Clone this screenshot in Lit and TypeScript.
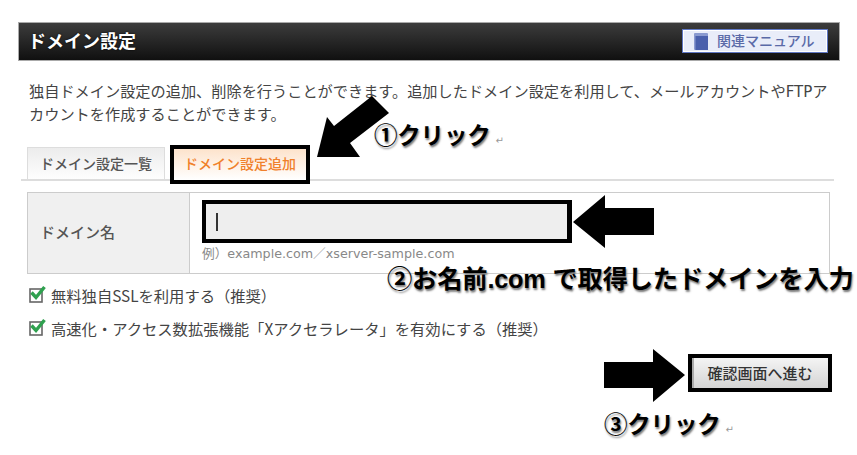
import { LitElement, html, css, svg } from 'lit';
import { customElement } from 'lit/decorators.js';

const check = html`<svg class="check" width="18" height="18" viewBox="0 0 18 18">
  <rect x="1" y="4" width="12" height="13" fill="#fff" stroke="#666" stroke-width="1.6"></rect>
  <path d="M2.5 7.5 L7 12.5 L15.5 2" fill="none" stroke="#2fa14f" stroke-width="3.4"></path>
</svg>`;

const arrow = (cls: string, points: string) => svg`<polygon class=${cls} points=${points}></polygon>`;

@customElement('app-root')
export class AppRoot extends LitElement {
  static styles = css`
    :host {
      display: block;
      position: relative;
      width: 857px;
      height: 455px;
      overflow: hidden;
      background: #fff;
      font-family: "DejaVu Sans", "Noto Sans CJK JP", sans-serif;
      color: #444;
    }
    .page {
      padding: 22px 18px 0 18px;
      box-sizing: border-box;
      width: 857px;
    }
    .head {
      box-sizing: border-box;
      width: 822px;
      height: 39px;
      border: 1px solid #aaa;
      background: linear-gradient(#3c3c3c, #101010);
      display: flex;
      align-items: center;
      justify-content: space-between;
      padding: 0 11px 0 9px;
    }
    .head h1 {
      margin: -3px 0 0 0;
      font: 700 18px "Noto Sans CJK JP", sans-serif;
      color: #fff;
      text-shadow: 0 0 2px #000;
    }
    .manual {
      box-sizing: border-box;
      width: 146px;
      height: 24px;
      margin-top: -1px;
      background: #e9edf9;
      border: 1px solid #5f77c4;
      box-shadow: inset 0 0 0 1px #fff;
      display: flex;
      align-items: center;
      gap: 9px;
      padding-left: 11px;
      font: 500 14px "Noto Sans CJK JP", sans-serif;
      color: #5a6aa8;
    }
    .manual span { margin-top: -3px; }
    .desc {
      margin: 18px 0 0 11px;
      width: 806px;
      font: 400 15.2px/23px "Noto Sans CJK JP", sans-serif;
      color: #444;
      word-break: break-all;
    }
    .desc .lat { font-family: "DejaVu Sans", sans-serif; font-size: 15px; line-height: 1; }
    .tabs {
      display: flex;
      align-items: flex-end;
      margin: 20px 0 0 3px;
      width: 813px;
      height: 39px;
      box-sizing: border-box;
      position: relative;
      gap: 5px;
    }
    .tabs::after {
      content: "";
      position: absolute;
      left: 0;
      right: 0;
      bottom: 3px;
      height: 2px;
      background: #ddd;
    }
    .tab {
      box-sizing: border-box;
      font: 500 14px "Noto Sans CJK JP", sans-serif;
      display: flex;
      align-items: center;
      justify-content: center;
      padding-bottom: 3px;
    }
    .tab.list {
      width: 138px;
      height: 34px;
      margin: 0 0 3px 6px;
      border: 1px solid #ddd;
      border-bottom: none;
      background: linear-gradient(#ececec, #fff);
      color: #555;
    }
    .tab.add {
      width: 140px;
      height: 39px;
      border: 4px solid #000;
      background: linear-gradient(#fde3cc, #fff);
      color: #f0802a;
      position: relative;
      z-index: 1;
    }
    .form {
      box-sizing: border-box;
      margin: 8px 0 0 9px;
      width: 803px;
      height: 82px;
      border: 1px solid #ccc;
      display: flex;
    }
    .label {
      box-sizing: border-box;
      width: 162px;
      background: #f0f0f0;
      border-right: 1px solid #ccc;
      display: flex;
      align-items: center;
      padding: 0 0 3px 12px;
      font: 500 15px "Noto Sans CJK JP", sans-serif;
      color: #555;
    }
    .field {
      padding: 7px 0 0 12px;
    }
    .input {
      box-sizing: border-box;
      width: 370px;
      height: 43px;
      border: 4px solid #000;
      border-right-width: 5px;
      background: #eee;
      display: flex;
      align-items: center;
      padding-left: 10px;
    }
    .input i {
      display: block;
      width: 1.5px;
      height: 18px;
      background: #333;
    }
    .hint {
      margin-top: 2px;
      font: 12.7px/18px "DejaVu Sans", "Noto Sans CJK JP", sans-serif;
      color: #888;
      white-space: nowrap;
    }
    .opts {
      margin: 10px 0 0 11px;
      display: flex;
      flex-direction: column;
      gap: 11px;
    }
    .opt {
      display: flex;
      align-items: center;
      gap: 4px;
      height: 22px;
      font: 400 15.3px "Noto Sans CJK JP", sans-serif;
      color: #444;
    }
    .check { flex: none; margin-top: -2px; }
    .actions {
      display: flex;
      justify-content: flex-end;
      width: 814px;
      margin-top: 15px;
    }
    .next {
      box-sizing: border-box;
      width: 144px;
      height: 38px;
      border: 4px solid #000;
      background: linear-gradient(#f4f4f4, #d4d4d4);
      box-shadow: inset 2px 0 0 #aaa;
      font: 500 15px "Noto Sans CJK JP", sans-serif;
      color: #333;
      display: flex;
      align-items: center;
      justify-content: center;
      padding: 0 0 2px 0;
    }
    .marks {
      position: absolute;
      left: 0;
      top: 0;
      pointer-events: none;
    }
    .marks polygon { fill: #000; }
    .cap {
      position: absolute;
      font: 700 23.5px/28px "Liberation Sans", "Noto Sans CJK JP", sans-serif;
      color: #000;
      text-shadow: 1px 2px 2px #777;
      white-space: nowrap;
      letter-spacing: -0.2px;
    }
    .cap small {
      font: 400 10px "DejaVu Sans", sans-serif;
      color: #999;
      text-shadow: none;
      margin-left: 5px;
    }
    .c1 { left: 374px; top: 122px; }
    .c2 { left: 387px; top: 265px; font-size: 25.3px; }
    .c3 { left: 604px; top: 411px; }
  `;

  render() {
    return html`
      <div class="page">
        <div class="head">
          <h1>ドメイン設定</h1>
          <div class="manual">
            <svg width="14" height="17" viewBox="0 0 14 17">
              <rect x="0" y="0" width="14" height="17" rx="1" fill="#8a9ad0"></rect>
              <rect x="1.5" y="3" width="12.5" height="14" fill="#4a60ac"></rect>
            </svg>
            <span>関連マニュアル</span>
          </div>
        </div>
        <p class="desc">独自ドメイン設定の追加、削除を行うことができます。追加したドメイン設定を利用して、メールアカウントや<span class="lat">FTP</span>アカウントを作成することができます。</p>
        <div class="tabs">
          <div class="tab list">ドメイン設定一覧</div>
          <div class="tab add">ドメイン設定追加</div>
        </div>
        <div class="form">
          <div class="label">ドメイン名</div>
          <div class="field">
            <div class="input"><i></i></div>
            <div class="hint">例）example.com／xserver-sample.com</div>
          </div>
        </div>
        <div class="opts">
          <div class="opt">${check}<span>無料独自SSLを利用する（推奨）</span></div>
          <div class="opt">${check}<span>高速化・アクセス数拡張機能「Xアクセラレータ」を有効にする（推奨）</span></div>
        </div>
        <div class="actions">
          <button class="next">確認画面へ進む</button>
        </div>
      </div>
      <svg class="marks" width="857" height="455">
        ${arrow('a1', '317,157 327,117 334,126 372,96 389,113 350,143 360,157')}
        ${arrow('a2', '573,222 605,195 605,208 654,208 654,235 605,235 605,248')}
        ${arrow('a3', '604,362 653,362 653,349 685,375 653,402 653,388 604,388')}
      </svg>
      <div class="cap c1">①クリック<small>↵</small></div>
      <div class="cap c2">②お名前.com で取得したドメインを入力</div>
      <div class="cap c3">③クリック<small>↵</small></div>
    `;
  }
}
